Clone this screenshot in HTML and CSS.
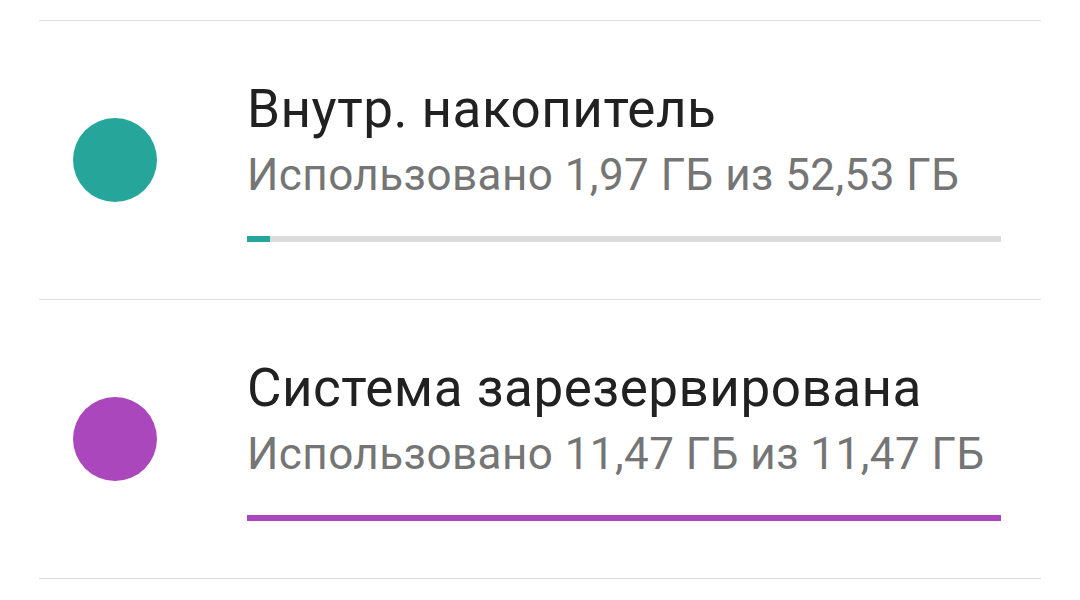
FILE: index.html
```html
<!DOCTYPE html>
<html lang="ru">
<head>
<meta charset="utf-8">
<title>Хранилище</title>
<meta name="viewport" content="width=device-width,initial-scale=1">
<link rel="stylesheet" href="styles.css">
</head>
<body>

<!-- ───── Storage volumes ───── -->
<ul class="volumes">
  <li class="vol">
    <span class="dot teal"></span>
    <div class="info">
      <div class="title">Внутр. накопитель</div>
      <div class="sub">Использовано 1,97 ГБ из 52,53 ГБ</div>
      <div class="bar"><div class="fill teal" style="width:3.05%"></div></div>
    </div>
  </li>
  <li class="vol">
    <span class="dot purple"></span>
    <div class="info">
      <div class="title">Система зарезервирована</div>
      <div class="sub">Использовано 11,47 ГБ из 11,47 ГБ</div>
      <div class="bar"><div class="fill purple" style="width:100%"></div></div>
    </div>
  </li>
</ul>

</body>
</html>
```

FILE: styles.css
```css
:root{
  --teal:#26a69a;--purple:#ab47bc;--line:#dedede;--track:#dcdcdc;
  --text:#212121;--muted:#757575
}
*{box-sizing:border-box;margin:0;padding:0}
body{background:#fff;font-family:Roboto,"Noto Sans",sans-serif;color:var(--text);height:600px;overflow:hidden}
.volumes{list-style:none;margin:20px 39px 0;border-top:1px solid var(--line)}
.vol{display:flex;align-items:center;height:279px;border-bottom:1px solid var(--line)}
.dot{flex:none;width:84px;height:84px;border-radius:50%;margin-left:34px;margin-right:90px}
.dot.teal,.fill.teal{background:var(--teal)}
.dot.purple,.fill.purple{background:var(--purple)}
.info{flex:1;padding-right:40px;padding-top:1px}
.title{font-size:53px;line-height:60px;letter-spacing:.5px}
.sub{font-size:44px;line-height:50px;color:var(--muted);margin-top:11px;letter-spacing:.45px}
.bar{height:6px;background:var(--track);margin-top:36px}
.fill{height:100%}
```
